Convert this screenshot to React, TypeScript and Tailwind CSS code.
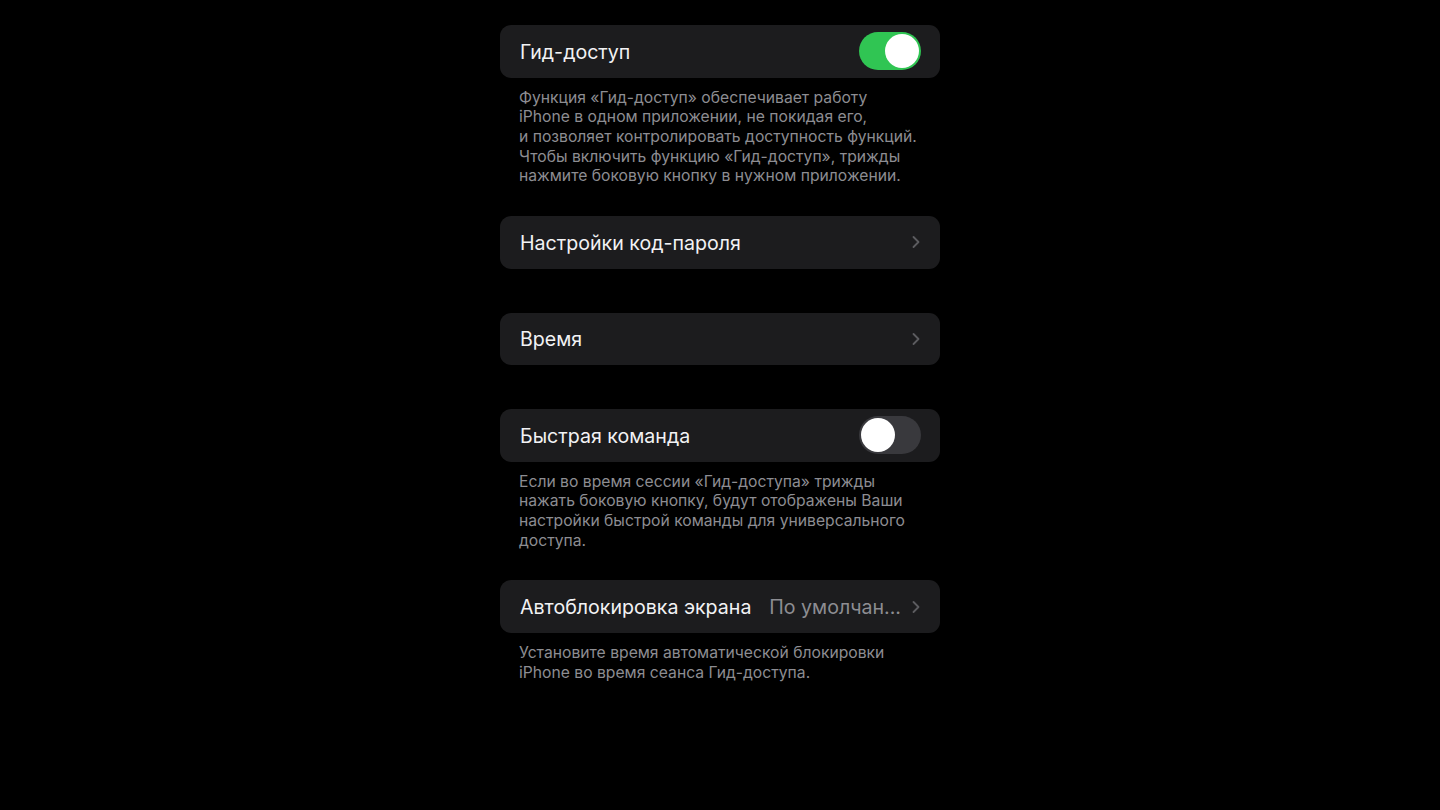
import { ChevronRight } from "lucide-react";

function Toggle({ on }: { on: boolean }) {
  return (
    <div
      className={`flex h-[38px] w-[62px] items-center rounded-full p-[2px] ${
        on ? "justify-end bg-[#30c553]" : "justify-start bg-[#39393d]"
      }`}
    >
      <div className="h-[34px] w-[34px] rounded-full bg-white" />
    </div>
  );
}

function Row({ label, children }: { label: string; children?: React.ReactNode }) {
  return (
    <div className="flex h-[52.5px] items-center justify-between rounded-[11px] bg-[#1c1c1e] pl-5 pr-[19px]">
      <span className="pt-[2px] text-[19.6px] text-[#f2f2f4]">{label}</span>
      {children}
    </div>
  );
}

function Chevron() {
  return <ChevronRight size={20} strokeWidth={2.2} className="text-[#5c5c60] -mr-[5px]" />;
}

function Footer({ children }: { children: React.ReactNode }) {
  return (
    <p className="pl-[19px] pt-[10px] text-[15.7px] leading-[19.7px] text-[#8d8d92]">{children}</p>
  );
}

export default function App() {
  return (
    <div
      className="flex min-h-[810px] w-full justify-center bg-black"
      style={{ fontFamily: "Inter, 'Noto Sans', sans-serif" }}
    >
      <div className="w-[440px] pt-[25px]">
        <Row label="Гид-доступ">
          <Toggle on />
        </Row>
        <Footer>
          Функция «Гид-доступ» обеспечивает работу
          <br />
          iPhone в одном приложении, не покидая его,
          <br />
          и позволяет контролировать доступность функций.
          <br />
          Чтобы включить функцию «Гид-доступ», трижды
          <br />
          нажмите боковую кнопку в нужном приложении.
        </Footer>

        <div className="mt-[30px]">
          <Row label="Настройки код-пароля">
            <Chevron />
          </Row>
        </div>

        <div className="mt-[44px]">
          <Row label="Время">
            <Chevron />
          </Row>
        </div>

        <div className="mt-[44px]">
          <Row label="Быстрая команда">
            <Toggle on={false} />
          </Row>
        </div>
        <Footer>
          Если во время сессии «Гид-доступа» трижды
          <br />
          нажать боковую кнопку, будут отображены Ваши
          <br />
          настройки быстрой команды для универсального
          <br />
          доступа.
        </Footer>

        <div className="mt-[30px]">
          <Row label="Автоблокировка экрана">
            <div className="flex items-center gap-[5px]">
              <span className="pt-[2px] text-[19.6px] text-[#8d8d92]">По умолчан...</span>
              <Chevron />
            </div>
          </Row>
        </div>
        <Footer>
          Установите время автоматической блокировки
          <br />
          iPhone во время сеанса Гид-доступа.
        </Footer>
      </div>
    </div>
  );
}
